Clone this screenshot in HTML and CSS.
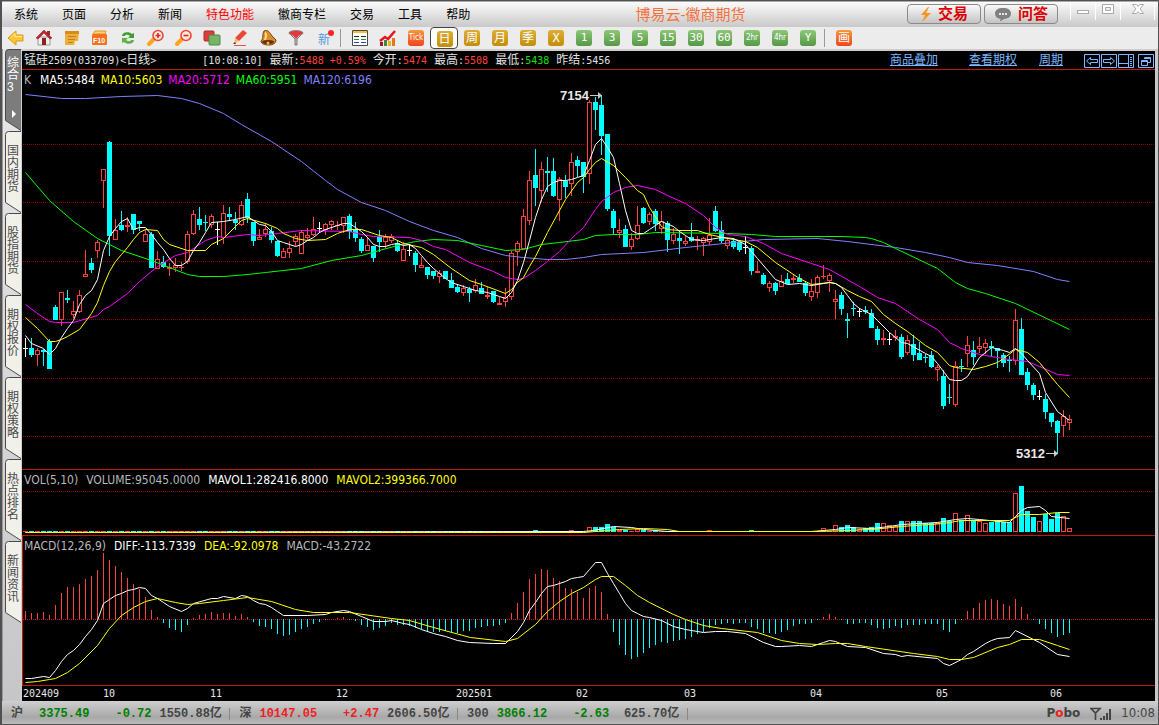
FILE: index.html
```html
<!DOCTYPE html>
<html lang="zh-CN">
<head>
    <meta charset="UTF-8">
    <meta name="viewport" content="width=device-width, initial-scale=1.0">
    <title>博易云-徽商期货</title>
    <link rel="stylesheet" href="styles.css">
</head>
<body>
    <header class="titlebar">
        <nav class="menu">
            <a href="#">系统</a>
            <a href="#">页面</a>
            <a href="#">分析</a>
            <a href="#">新闻</a>
            <a href="#" class="hot">特色功能</a>
            <a href="#">徽商专栏</a>
            <a href="#">交易</a>
            <a href="#">工具</a>
            <a href="#">帮助</a>
        </nav>
        <h1>博易云-徽商期货</h1>
        <div class="actions">
            <button class="action">
                <svg width="12" height="15" viewBox="0 0 12 15"><path d="M8 0L1 8h4L2 15l9-9H6l3-6z" fill="#f7941d"/></svg>
                交易
            </button>
            <button class="action">
                <svg width="18" height="15" viewBox="0 0 18 15"><path d="M9 1c5 0 8 2 8 5.500s-3 5-7 5.500L6 14.500 6.500 12C3 11.500 1 9.500 1 6.500 1 3 4 1 9 1z" fill="#808080"/><path d="M5 6h2v2H5zM8 6h2v2H8zM11 6h2v2h-2z" fill="#e8e8e8"/></svg>
                问答
            </button>
        </div>
        <div class="winbtns">
            <button aria-label="最小化"><svg width="14" height="12"><rect x="1.500" y="7.500" width="11" height="3" fill="#fff" stroke="#aaa"/></svg></button>
            <button aria-label="最大化"><svg width="14" height="12"><path d="M1.500 1.500h11v9h-11z" fill="#fff" stroke="#aaa"/><path d="M4.500 4.500h5v3h-5z" fill="#eee" stroke="#aaa"/></svg></button>
            <button class="close" aria-label="关闭"><svg width="14" height="12"><path d="M1.500 1.500h4L7 3.500l1.500-2h4L9 6l3.500 4.500h-4L7 8.500l-1.500 2h-4L5 6z" fill="#fff" stroke="#aaa"/></svg></button>
        </div>
    </header>

    <div class="toolbar">
        <button aria-label="后退"><svg width="18" height="18" viewBox="0 0 18 18"><path d="M1 9l8-7v4h7v6H9v4z" fill="#fcc62e" stroke="#d9981a"/><path d="M4 8.500l4-4v3h7" fill="none" stroke="#fff0a0"/></svg></button>
        <button aria-label="首页"><svg width="18" height="18" viewBox="0 0 18 18"><path d="M3 8h12v8H3z" fill="#eee" stroke="#999"/><path d="M12 2h3v4h-3z" fill="#9c2a2a"/><path d="M1 9l8-8 8 8-2 1-6-6-6 6z" fill="#c8202c" stroke="#8c1820" stroke-width=".5"/><path d="M7 9h4v7H7z" fill="#8d2020"/></svg></button>
        <button aria-label="公告"><svg width="18" height="18" viewBox="0 0 18 18"><path d="M3 2h13l-1 10-4 4H2V3z" fill="#eeae3c"/><path d="M2 2h14v3H2z" fill="#d88a1c"/><path d="M11 16l1-4h4z" fill="#fff0bd"/><path d="M5 7.500h8M5 10.500h7M5 13.500h5" stroke="#c08020"/></svg></button>
        <button aria-label="F10"><svg width="18" height="18" viewBox="0 0 18 18"><path d="M2 5l2-3h11l-1 3z" fill="#ffcf70" stroke="#e49524"/><rect x="1" y="5" width="15" height="11" rx="1" fill="#f37120"/><text x="8" y="14" text-anchor="middle" class="f10">F10</text></svg></button>
        <button aria-label="刷新"><svg width="18" height="18" viewBox="0 0 18 18"><path d="M3 7c0-4 7-5 10-2l2-1v5h-6l2-2c-3-2-5-1-5 0z" fill="#439c2f"/><path d="M15 11c0 4-7 5-10 2l-2 1V9h6l-2 2c3 2 5 1 5 0z" fill="#5db343"/></svg></button>
        <button aria-label="放大"><svg width="18" height="18" viewBox="0 0 18 18"><path d="M7 10l-5 5" stroke="#fca51c" stroke-width="4" stroke-linecap="round"/><circle cx="11" cy="6.500" r="5" fill="#fbe9e2" stroke="#ee4532" stroke-width="1.600"/><path d="M8.500 6.500h5M11 4v5" stroke="#e12617" stroke-width="1.600"/></svg></button>
        <button aria-label="缩小"><svg width="18" height="18" viewBox="0 0 18 18"><path d="M7 10l-5 5" stroke="#fca51c" stroke-width="4" stroke-linecap="round"/><circle cx="11" cy="6.500" r="5" fill="#fbe9e2" stroke="#ee4532" stroke-width="1.600"/><path d="M8.500 6.500h5" stroke="#e12617" stroke-width="1.600"/></svg></button>
        <button aria-label="叠加"><svg width="18" height="18" viewBox="0 0 18 18"><rect x="1" y="2" width="10" height="10" rx="1" fill="#dd3b3b" stroke="#b42a2a"/><rect x="6" y="6" width="11" height="10" rx="1" fill="#76b569" stroke="#4e8748"/></svg></button>
        <button aria-label="画线"><svg width="18" height="18" viewBox="0 0 18 18"><path d="M4 9l8-8 4 3-8 8z" fill="#ed4634"/><path d="M4 9l4 3-5 3z" fill="#f6b67b"/><path d="M2 15l2-2 1 2z" fill="#333"/><path d="M3 16.500h12" stroke="#e85340"/></svg></button>
        <button aria-label="预警"><svg width="18" height="18" viewBox="0 0 18 18"><path d="M5 2c4-2 6 2 8 5l4 4c0 3-3 5-7 5s-8-1-8-4c3-3 1-7 3-10z" fill="#d98f25" stroke="#7c3b12"/><path d="M6 4c2 1 1 4 0 7" stroke="#ffe08c" stroke-width="2" fill="none"/><ellipse cx="9" cy="13" rx="6" ry="2" fill="#642c12"/><circle cx="9" cy="14" r="1.500" fill="#f5bd31"/></svg></button>
        <button aria-label="筛选"><svg width="18" height="18" viewBox="0 0 18 18"><path d="M2 4l6 6v6h2v-6l6-6z" fill="#c4c4c4" stroke="#777"/><ellipse cx="9" cy="4" rx="7" ry="2.500" fill="#e9343a" stroke="#888"/><path d="M6 6h6l-3 4z" fill="#e9343a"/></svg></button>
        <button class="newbtn">新<i></i></button>
        <span class="sep"></span>
        <button aria-label="报价"><svg width="18" height="18" viewBox="0 0 18 18"><path d="M1.500 1.500h15v15h-15z" fill="#fff" stroke="#4a4a4a"/><path d="M2 3h14" stroke="#f5bb3d" stroke-width="2"/><path d="M3 7.500h5M10 7.500h5" stroke="#222"/><path d="M3 10.500h5M10 10.500h5" stroke="#1b9b33"/><path d="M3 13.500h5M10 13.500h5" stroke="#2340b0"/></svg></button>
        <button aria-label="走势"><svg width="18" height="18" viewBox="0 0 18 18"><path d="M1 13h3v4H1z" fill="#8d2121"/><path d="M5 11h3v6H5z" fill="#418838"/><path d="M9 12h3v5H9z" fill="#f4ad20"/><path d="M13 9h3v8h-3z" fill="#e2761b"/><path d="M1 12l5-4 3 2 7-8" fill="none" stroke="#e6151b" stroke-width="2.500"/></svg></button>
        <button><span class="tile orange small">Tick</span></button>
        <button class="current"><span class="tile amber">日</span></button>
        <button><span class="tile amber">周</span></button>
        <button><span class="tile amber">月</span></button>
        <button><span class="tile amber">季</span></button>
        <button><span class="tile amber">X</span></button>
        <button><span class="tile green">1</span></button>
        <button><span class="tile green">3</span></button>
        <button><span class="tile green">5</span></button>
        <button><span class="tile green">15</span></button>
        <button><span class="tile green">30</span></button>
        <button><span class="tile green">60</span></button>
        <button><span class="tile green small">2hr</span></button>
        <button><span class="tile green small">4hr</span></button>
        <button><span class="tile green">Y</span></button>
        <span class="sep"></span>
        <button><span class="tile orange">画</span></button>
    </div>

    <main class="workspace">
        <aside class="tabs">
            <svg width="0" height="0" class="defs">
                <symbol id="tab" viewBox="0 0 16 82"><path d="M16 .500H3.500Q.500 .500 .500 3.500V71.500L16 81.500" stroke-width="1"/></symbol>
            </svg>
            <button class="tab active"><svg><use href="#tab"/></svg><span>综合3</span><b></b></button>
            <button class="tab"><svg><use href="#tab"/></svg><span>国内期货</span></button>
            <button class="tab"><svg><use href="#tab"/></svg><span>股指期货</span></button>
            <button class="tab"><svg><use href="#tab"/></svg><span>期权报价</span></button>
            <button class="tab"><svg><use href="#tab"/></svg><span>期权策略</span></button>
            <button class="tab"><svg><use href="#tab"/></svg><span>热点排名</span></button>
            <button class="tab"><svg><use href="#tab"/></svg><span>新闻资讯</span></button>
        </aside>

        <section class="chart">
            <div class="quote">
                <span class="name">锰硅<i>2509(033709)&lt;</i>日线<i>&gt;</i></span>
                <span><i>[10:08:10]</i></span>
                <span>最新<i>:<em class="up">5488 +0.59%</em></i></span>
                <span>今开<i>:<em class="up">5474</em></i></span>
                <span>最高<i>:<em class="up">5508</em></i></span>
                <span>最低<i>:<em class="down">5438</em></i></span>
                <span>昨结<i>:5456</i></span>
                <div class="links">
                    <a href="#" class="overlay">商品叠加</a>
                    <a href="#">查看期权</a>
                    <a href="#">周期</a>
                </div>
                <div class="panebtns">
                    <button aria-label="左移"><svg width="16" height="14"><path d="M.500 .500h15v13H.500zM2.500 7l4-3.500v2h7v3h-7v2z"/></svg></button>
                    <button aria-label="右移"><svg width="16" height="14"><path d="M.500 .500h15v13H.500zM13.500 7l-4-3.500v2h-7v3h7v2z"/></svg></button>
                    <button aria-label="侧栏"><svg width="16" height="14"><path d="M.500 .500h15v13H.500zM10.500 1v12M1 9.500h9M12 3.500h2M12 5.500h2M12 7.500h2M12 9.500h2M12 11.500h2"/></svg></button>
                    <button class="restore" aria-label="还原"><svg width="16" height="14"><path d="M.500 .500h15v13H.500zM6.500 5V3.500h6v5H10M6 4.500h6M3.500 6.500h6v5h-6zM3 7.500h6"/></svg></button>
                </div>
            </div>

            <div class="pane price">
                <svg id="price"></svg>
                <p class="legend">
                    <span class="k">K</span>
                    <span class="white">MA5:5484</span>
                    <span class="yellow">MA10:5603</span>
                    <span class="magenta">MA20:5712</span>
                    <span class="lime">MA60:5951</span>
                    <span class="blue">MA120:6196</span>
                </p>
            </div>
            <div class="pane vol">
                <svg id="vol"></svg>
                <p class="legend">
                    <span>VOL(5,10)</span>
                    <span>VOLUME:95045.0000</span>
                    <span class="white">MAVOL1:282416.8000</span>
                    <span class="yellow">MAVOL2:399366.7000</span>
                </p>
            </div>
            <div class="pane macd">
                <svg id="macd"></svg>
                <p class="legend">
                    <span>MACD(12,26,9)</span>
                    <span class="white">DIFF:-113.7339</span>
                    <span class="yellow">DEA:-92.0978</span>
                    <span>MACD:-43.2722</span>
                </p>
            </div>
            <div class="axis"><svg id="axis"></svg></div>
        </section>
    </main>

    <footer class="status">
        <span class="market first">沪</span>
        <span class="down">3375.49</span>
        <span class="change down">-0.72</span>
        <span class="amount">1550.88亿</span>
        <span class="market line">深</span>
        <span class="up">10147.05</span>
        <span class="change up">+2.47</span>
        <span class="amount">2606.50亿</span>
        <span class="market line">300</span>
        <span class="down">3866.12</span>
        <span class="change down">-2.63</span>
        <span class="amount">625.70亿</span>
        <span class="line">&nbsp;</span>
        <span class="brand">P<em>o</em>bo</span>
        <svg width="22" height="14" viewBox="0 0 22 14"><path d="M1 1.500h9L5.500 6zM5.500 6v7" fill="none" stroke="#444" stroke-width="1.600"/><path d="M10 11h2v2h-2zM13 9h2v4h-2zM16 6h2v7h-2zM19 2h2v11h-2z" fill="#444"/></svg>
        <time>10:08</time>
    </footer>

    <script src="chart.js"></script>
</body>
</html>
```
FILE: styles.css
```css
* {
    box-sizing: border-box;
    margin: 0;
    padding: 0;
}
body {
    display: flex;
    flex-direction: column;
    height: 100vh;
    overflow: hidden;
    border: 1px solid #505050;
    border-left-width: 2px;
    background-color: #c8c8c8;
    font-family: "Liberation Sans", "Noto Sans CJK SC", sans-serif;
    font-size: 12px;
    color: #000;
}
button {
    border: 0;
    background: none;
    font-family: inherit;
    color: inherit;
}
svg {
    display: block;
}
i, em {
    font-style: normal;
}
a {
    color: inherit;
}

/* title bar */
.titlebar {
    display: flex;
    align-items: center;
    flex: none;
    height: 26px;
    border-top: 1px solid #aaa;
    background: linear-gradient(#fbfbfb, #c9c9c9);
}
.menu {
    display: flex;
    gap: 24px;
    padding-left: 12px;
    line-height: 24px;
}
.menu a {
    text-decoration: none;
}
.menu .hot {
    color: #f00;
}
.titlebar h1 {
    flex: 1;
    padding-left: 4px;
    text-align: center;
    font-size: 15px;
    font-weight: normal;
    line-height: 22px;
    color: #f4713c;
}
.actions {
    display: flex;
    align-self: flex-start;
    gap: 3px;
    padding-top: 2px;
}
.action {
    display: flex;
    align-items: center;
    justify-content: center;
    gap: 6px;
    width: 74px;
    height: 20px;
    border: 1px solid #8a8a8a;
    border-radius: 4px;
    background: linear-gradient(#fafafa, #c4c4c4);
    font-size: 15px;
    font-weight: bold;
    line-height: 18px;
    color: #e00000;
}
.winbtns {
    display: flex;
    align-self: flex-start;
    margin: 0 3px 0 12px;
}
.winbtns button {
    display: flex;
    justify-content: center;
    width: 25px;
    height: 18px;
    padding-top: 1px;
    border-left: 1px solid #fff;
}
.winbtns .close {
    width: 35px;
    border-right: 1px solid #fff;
}

/* toolbar */
.toolbar {
    display: flex;
    flex: none;
    height: 22px;
    background-color: #ececec;
}
.toolbar button {
    display: flex;
    align-items: center;
    justify-content: center;
    width: 28px;
    height: 22px;
}
.toolbar .current {
    padding: 1px 0 0 1px;
    border: 1px solid #444;
    border-radius: 4px;
    background-color: #fff;
}
.sep {
    width: 8px;
    height: 18px;
    margin-top: 2px;
    background: linear-gradient(#999, #999) 2px 0 / 1px 100% no-repeat;
}
.tile {
    width: 16px;
    height: 16px;
    border-radius: 3px;
    font-family: "DejaVu Sans Mono", "Noto Sans CJK SC", monospace;
    font-size: 12px;
    line-height: 16px;
    text-align: center;
    white-space: nowrap;
    color: #fff;
}
.amber {
    background: linear-gradient(#dcae38, #c38d08);
}
.green {
    background: linear-gradient(#8cc878, #559845);
    font-size: 11px;
}
.orange {
    background: linear-gradient(#f79a3a, #f0431f);
}
.tile.small {
    font-family: "DejaVu Sans Condensed", "Liberation Sans", sans-serif;
    font-size: 8px;
}
.f10 {
    font: bold 7px "Liberation Sans", sans-serif;
    fill: #fff;
}
.toolbar .newbtn {
    position: relative;
    font-size: 12px;
    color: #5598d8;
}
.newbtn i {
    position: absolute;
    top: 3px;
    right: 4px;
    width: 6px;
    height: 6px;
    border-radius: 50%;
    background-color: #f22;
}

/* side tabs */
.workspace {
    display: flex;
    flex: 1;
    min-height: 0;
}
.tabs {
    flex: none;
    width: 18px;
    padding-left: 2px;
    border-left: 1px solid #9a9a9a;
    background: linear-gradient(#e9e9ec, #c6c6c8);
}
.defs {
    position: absolute;
}
.tab {
    position: relative;
    display: flex;
    align-items: flex-start;
    width: 16px;
    height: 82px;
    padding: 14px 0 0 2px;
    text-align: left;
    color: #4a4a4a;
}
.tab svg {
    position: absolute;
    top: 0;
    left: 0;
    width: 16px;
    height: 82px;
    fill: #f1f1ea;
    stroke: #4a4a4a;
}
.tab span {
    position: relative;
    width: 12px;
    font-size: 12px;
    line-height: 12px;
    word-break: break-all;
}
.tab.active {
    padding-top: 8px;
    color: #fff;
}
.tab.active svg {
    fill: #7c7c7c;
}
.tab b {
    position: absolute;
    top: 61px;
    left: 7px;
    border: 4px solid transparent;
    border-left-color: #fff;
    border-right: 0;
}

/* chart */
.chart {
    display: flex;
    flex: 1;
    flex-direction: column;
    min-width: 0;
    margin-right: 3px;
    border-top: 2px solid #d0cccc;
    border-left: 2px solid #d0cccc;
    background-color: #000;
    color: #e0e0e0;
}
.quote {
    display: flex;
    gap: 7px;
    flex: none;
    height: 19px;
    padding-left: 2px;
    border-bottom: 1px solid #c01808;
    line-height: 18px;
    white-space: nowrap;
}
.quote i, .axis {
    font-family: "DejaVu Sans Mono", monospace;
    font-size: 10px;
}
.quote .name {
    margin-right: 39px;
}
.quote .up {
    color: #ff4040;
}
.quote .down {
    color: #10e010;
}
.links {
    display: flex;
    gap: 22px;
    margin-left: auto;
    color: #7ab8ff;
}
.overlay {
    margin-right: 9px;
}
.panebtns {
    display: flex;
    gap: 1px;
    padding: 1px 1px 0 14px;
    fill: none;
    stroke: #7ab8ff;
}
.restore {
    margin-left: 3px;
}
.pane {
    position: relative;
    flex: none;
    border-bottom: 1px solid #c01808;
}
.pane svg {
    position: absolute;
    top: 0;
    left: 0;
    width: 100%;
    height: 100%;
}
.price {
    flex: 1;
}
.vol {
    height: 66px;
}
.macd {
    height: 150px;
    border-left: 1px solid #c01808;
}
.macd svg {
    left: -1px;
}
.legend {
    position: relative;
    display: flex;
    gap: 8px;
    padding-left: 2px;
    font-family: "DejaVu Sans Condensed", "DejaVu Sans", sans-serif;
    font-size: 12px;
    line-height: 20px;
    color: #b8b8b8;
}
.price .legend {
    gap: 6px;
}
.macd .legend {
    padding-left: 1px;
}
.legend .k {
    margin-right: 3px;
}
.legend .white {
    color: #fff;
}
.legend .yellow {
    color: #ff0;
}
.legend .magenta {
    color: #f0f;
}
.legend .lime {
    color: #0f0;
}
.legend .blue {
    color: #8080ff;
}
.axis {
    flex: none;
    height: 15px;
}
.axis svg {
    width: 100%;
    height: 15px;
    fill: #e8e8e8;
}
.mark {
    font: bold 13px "Liberation Sans", sans-serif;
    fill: #e8e8e8;
}

/* status bar */
.status {
    display: flex;
    align-items: baseline;
    flex: none;
    height: 23px;
    padding: 2px 3px 0 9px;
    background: linear-gradient(#cfcfcf, #a8a8a8 70%, #bbb);
    font-family: "Liberation Mono", "Noto Sans CJK SC", monospace;
    font-weight: bold;
    white-space: nowrap;
    color: #444;
}
.status svg {
    align-self: center;
}
.market {
    margin-right: 8px;
}
.market.first {
    margin-right: 16px;
}
.change {
    margin-left: 26px;
}
.amount {
    width: 62px;
    margin: 0 8px;
    text-align: right;
}
.line {
    padding-left: 9px;
    border-left: 1px solid #888;
    line-height: 12px;
}
.status .down {
    color: #008000;
}
.status .up {
    color: #f02020;
}
.brand {
    margin: 0 10px 0 auto;
    font-family: "DejaVu Sans", sans-serif;
    font-size: 12px;
}
.brand em {
    color: #f02020;
}
.status time {
    margin-left: 9px;
    font-family: "DejaVu Sans Condensed", sans-serif;
    font-size: 13px;
    font-weight: normal;
}
```
FILE: chart.js
```js
const STEP = 6
const X0 = 25
const RED = '#ff4040'
const CYAN = '#00ffff'

// colour (r up, c down, w flat), body top, body bottom, high, low
const candles = `
w 348 348 338 357,c 348 355 338 357,r 350 355 348 366,c 350 352 349 366,c 341 369 339 369,c 307 320 305 320,r 292 320 292 326,
c 298 300 290 303,r 311 315 301 318,r 295 312 290 313,r 274 277 250 277,c 263 270 258 273,r 242 251 240 258,r 169 181 169 208,
c 142 236 141 256,r 230 240 219 240,c 225 230 211 231,r 225 227 217 232,c 214 230 214 234,c 221 224 221 231,r 234 242 230 242,
c 234 268 232 268,r 259 269 251 269,c 262 267 256 268,r 267 269 263 276,r 265 268 258 272,r 267 268 262 271,r 234 262 231 264,
r 214 234 210 235,c 219 225 207 230,c 222 223 215 231,r 216 225 214 228,w 229 229 222 245,r 213 238 205 244,c 214 217 207 221,
c 220 223 212 230,r 205 225 201 226,c 199 218 193 223,c 222 241 222 246,r 237 240 229 240,r 229 234 223 237,c 231 240 227 243,
c 241 256 241 257,r 251 258 248 258,r 248 253 241 258,r 236 242 234 246,r 232 254 230 254,r 235 238 228 240,r 229 235 217 236,
w 228 228 222 233,r 224 230 223 235,r 221 225 220 230,r 225 226 221 230,r 217 226 217 233,c 216 232 214 239,c 229 238 222 242,
c 239 251 237 253,r 245 251 237 251,c 246 258 246 262,c 237 242 230 252,r 237 242 234 249,r 236 241 234 243,c 243 251 240 252,
r 249 261 242 261,w 250 250 244 256,c 253 265 251 272,r 265 268 257 268,c 267 275 267 279,c 271 276 271 279,r 273 277 270 283,
c 271 279 271 279,c 280 288 273 288,c 287 292 285 293,r 288 293 285 296,c 289 293 287 302,r 285 291 279 293,c 288 294 282 294,
r 295 297 287 299,c 291 302 291 303,r 303 305 297 305,r 297 302 288 307,r 253 297 251 300,r 243 252 241 266,r 216 249 209 249,
r 180 221 171 225,c 175 188 149 206,r 169 191 162 202,c 171 173 157 192,c 171 196 158 197,r 179 200 177 221,c 181 187 175 198,
r 162 184 153 196,c 160 166 156 177,c 162 177 162 193,r 102 174 100 184,c 102 110 97 130,c 105 136 95 155,c 134 209 134 211,
c 211 228 209 235,r 230 233 219 238,c 229 247 225 247,r 239 247 233 250,r 225 239 206 240,c 208 223 207 224,r 214 222 212 225,
c 211 224 209 231,r 221 229 211 234,c 223 240 221 252,r 234 241 228 244,c 238 241 230 254,r 241 244 236 246,c 237 241 223 242,
r 239 241 236 250,r 238 243 237 256,r 235 242 218 245,c 211 231 206 232,c 230 241 221 243,r 240 246 238 249,c 241 247 238 249,
c 242 250 242 252,w 247 247 236 254,c 248 271 246 275,r 271 273 261 273,c 275 284 273 285,r 283 288 281 292,c 283 291 282 295,
r 281 287 275 287,c 279 284 273 284,r 278 280 274 283,c 278 282 274 282,c 283 293 281 296,r 291 297 279 301,r 277 293 275 298,
r 276 277 265 279,r 275 281 273 292,r 299 302 290 319,c 295 309 292 315,c 319 321 313 338,c 308 309 302 316,w 311 311 308 317,
c 310 312 306 314,c 313 328 309 328,c 329 340 326 345,r 338 340 330 345,w 339 339 333 345,r 336 338 330 341,c 337 357 334 359,
r 340 353 335 355,c 344 355 335 361,c 353 360 342 360,c 357 358 354 363,c 355 367 351 368,r 367 370 365 381,c 376 406 370 409,
c 397 398 384 404,r 366 405 361 407,c 366 367 359 372,r 345 354 336 367,c 350 357 341 365,r 346 349 337 353,r 343 348 339 354,
c 346 348 341 356,c 348 351 348 368,c 355 363 353 367,c 360 361 356 372,r 320 361 309 365,c 329 375 318 375,c 372 385 368 390,
c 385 395 383 400,w 396 396 390 400,c 399 412 394 419,c 413 422 413 427,c 421 433 420 454,r 416 426 410 437,r 419 423 415 430
`.trim().split(',').map(s => {
    const [c, ...n] = s.trim().split(' ')
    return [c, ...n.map(Number)]
})

const ma5 = '25,335 31,343 43,348 49,354 55,348 61,337 67,328 73,320 79,304 85,295 91,290 97,279 103,250 109,236 115,228 121,221 127,218 133,229 139,227 145,227 151,234 157,242 163,249 169,258 175,265 181,265 187,261 193,250 199,242 205,232 211,222 223,221 235,219 247,216 253,220 259,224 265,225 271,231 277,240 283,242 295,246 301,244 307,240 313,237 319,232 325,229 343,223 349,223 355,227 361,231 367,237 373,244 379,246 385,246 391,244 397,243 403,245 409,244 415,248 421,255 427,262 433,268 439,273 445,278 451,282 469,288 475,290 487,292 499,296 505,298 511,292 517,280 523,262 529,240 535,217 541,199 547,186 553,182 559,180 565,180 571,179 577,177 583,175 589,160 595,144 601,138 607,147 613,157 619,183 625,210 631,230 637,233 643,233 649,229 655,225 661,221 673,226 679,231 685,235 691,239 703,240 721,237 733,238 739,241 745,244 757,258 775,279 787,284 799,283 811,285 823,283 829,282 835,283 841,287 847,295 853,303 859,308 871,314 877,320 889,332 901,342 907,343 925,353 931,356 937,363 949,379 955,380 961,380 967,376 979,357 991,347 1003,350 1009,352 1015,348 1021,353 1027,360 1039,373 1045,392 1057,411 1069,420'
const ma10 = '25,317 37,328 49,341 55,341 61,339 67,336 79,329 85,321 91,313 97,302 103,285 109,271 115,261 121,254 127,247 133,239 139,232 145,229 157,230 163,239 169,244 187,250 205,250 211,244 223,238 235,226 241,220 247,218 265,223 277,228 283,233 295,238 307,240 325,239 337,233 349,229 361,229 367,231 379,235 391,237 403,243 421,247 433,254 451,268 469,280 481,284 505,293 511,289 517,282 523,277 529,266 535,256 541,244 547,232 565,199 577,182 583,177 589,169 595,162 601,158 613,165 625,177 637,190 643,194 649,207 661,226 667,229 679,230 697,230 709,234 727,238 745,241 757,247 775,262 799,278 811,284 829,282 835,283 847,290 859,296 871,301 883,314 895,323 907,331 925,345 937,352 949,365 955,367 973,369 985,366 997,362 1003,358 1015,349 1027,352 1039,362 1057,384 1069,397'
const ma20 = '25,304 37,313 49,321 55,322 73,322 97,315 103,309 109,306 127,293 139,281 157,266 175,255 187,252 193,248 205,240 217,236 223,237 247,234 259,235 277,233 301,230 349,231 361,234 373,236 409,237 421,240 433,246 445,249 469,262 493,271 505,277 517,279 523,278 535,270 547,261 559,251 571,238 583,227 595,209 601,201 613,192 625,187 637,185 655,189 667,195 685,203 703,215 715,227 727,234 745,236 763,243 781,253 811,263 829,269 859,286 877,297 895,303 919,319 937,329 949,342 961,348 979,354 1009,359 1027,361 1039,366 1057,374 1069,375'
const ma60 = '25,172 49,200 73,221 97,238 121,250 151,260 187,274 199,276 223,276 247,274 265,272 301,268 331,260 361,255 379,250 397,245 415,241 433,239 457,240 481,245 505,250 523,249 541,244 559,242 583,239 595,235 613,234 637,234 655,232 727,233 751,234 775,236 841,236 865,237 871,238 883,242 895,248 937,268 955,282 967,288 985,293 1015,303 1069,329'
const ma120 = '25,94 61,98 85,98 121,96 157,95 181,98 199,103 223,113 241,124 271,141 301,161 325,180 337,189 361,202 385,210 409,221 433,230 457,237 481,248 505,255 523,257 547,259 565,259 583,257 601,254 643,252 685,247 733,242 763,239 817,238 847,241 895,247 925,252 949,257 967,262 997,265 1033,271 1057,279 1069,281'

// top of each volume bar; bars not listed are one pixel high
const volTops = { 85: 530, 91: 530, 94: 527, 95: 527, 96: 527, 97: 524, 98: 527, 99: 530, 100: 530, 102: 529, 103: 530, 114: 530, 121: 530 }
const lateVol = [528, 531, 525, 527, 525, 527, 529, 528, 527, 523, 523, 525, 526, 521, 521, 521, 521, 523, 523, 523, 518, 521, 513, 520, 515, 520, 521, 523, 522, 520, 522, 522, 493, 486, 511, 517, 521, 514, 519, 513, 516, 528]
lateVol.forEach((v, i) => volTops[133 + i] = v)
const vol5 = '25,532 583,531 593,530 613,526 631,527 643,529 667,531 811,531 835,529 847,527 871,528 889,526 901,524 937,522 955,519 967,518 979,519 1009,522 1015,516 1021,510 1027,507 1039,506 1045,510 1051,516 1069,518'
const vol10 = '25,532 583,532 619,529 643,528 667,529 679,531 817,531 847,530 871,529 901,526 943,523 961,520 1009,520 1021,514 1039,514 1057,512 1069,512'

const ZERO = 619
const bars = [
    611, 613, 613, 612, 615, 605, 593, 587, 587, 584, 579, 576, 570, 553, 560, 566, 572, 578, 584, 589, 597, 610, 617, 623, 628,
    630, 632, 625, 618, 615, 614, 612, 614, 613, 613, 616, 614, 617, 622, 626, 627, 629, 634, 636, 635, 632, 629, 627, 624, 622,
    620, 619, 618, 617, 620, 621, 625, 627, 630, 628, 626, 623, 625, 625, 626, 628, 629, 631, 632, 632, 631, 632, 633, 631, 631,
    628, 627, 626, 626, 625, 623, 613, 603, 592, 579, 574, 569, 570, 578, 581, 588, 589, 592, 598, 588, 586, 592, 614, 632, 645,
    655, 659, 657, 653, 648, 645, 642, 643, 641, 640, 639, 637, 634, 632, 628, 625, 624, 623, 624, 623, 623, 627, 629, 633, 633,
    634, 632, 630, 626, 624, 624, 623, 620, 617, 614, 617, 620, 624, 624, 623, 623, 625, 628, 629, 628, 626, 628, 625, 625, 625,
    624, 624, 624, 630, 632, 624, 620, 611, 608, 603, 600, 599, 600, 604, 606, 599, 607, 614, 620, 624, 629, 633, 637, 635, 633
]
const diff = '25,678 31,678 43,676 49,677 55,670 61,661 67,654 73,650 79,644 85,636 91,629 97,620 103,603 109,599 115,595 121,593 127,590 133,589 139,587 145,588 151,595 157,598 163,602 169,606 181,611 187,608 193,603 211,598 217,598 223,596 235,598 241,595 247,596 253,600 259,603 265,604 271,607 277,611 283,615 307,615 325,614 331,612 343,610 349,611 361,616 373,621 385,621 391,620 403,623 409,624 421,629 433,633 445,636 457,640 469,642 493,643 505,643 511,637 517,631 523,622 529,610 535,602 541,593 547,586 553,585 559,583 565,581 571,578 577,577 583,576 589,569 595,562 601,562 607,573 613,583 619,593 625,603 631,610 637,613 643,616 649,617 661,620 673,626 685,629 703,632 715,631 727,631 745,633 763,642 775,646 781,646 799,645 811,646 823,642 829,640 835,641 847,646 865,647 883,653 895,654 901,656 907,655 937,658 943,663 949,665 961,659 967,654 973,651 985,643 991,640 997,638 1009,637 1015,630 1033,639 1039,642 1057,654 1069,656'
const dea = '25,682 37,681 49,679 55,678 67,672 79,663 97,645 109,628 121,615 133,607 145,601 157,598 175,602 187,604 199,603 223,600 247,597 271,601 295,609 313,612 349,612 391,618 409,620 433,627 470,637 505,641 517,638 535,624 547,611 559,601 571,593 583,587 595,579 601,576 613,576 625,585 637,595 649,602 673,614 685,619 703,625 721,628 757,632 781,640 799,643 817,644 835,643 847,643 865,646 913,653 937,656 949,659 961,659 973,657 997,647 1009,644 1021,639 1039,639 1057,645 1069,649'

function rect(x, y, w, h, color) {
    return `<rect x="${x}" y="${y}" width="${w}" height="${h}" fill="${color}"/>`
}

function box(x, top, bottom, color) {
    return `<rect x="${x - 1.5}" y="${top + 0.5}" width="4" height="${bottom - top - 1}" fill="#000" stroke="${color}"/>`
}

function line(points, color) {
    return `<polyline points="${points}" transform="translate(.5 .5)" fill="none" stroke="${color}"/>`
}

function grid(y, color) {
    return `<path d="M23 ${y}.5H3000" stroke="${color}" stroke-dasharray="1 1"/>`
}

// all panes share one coordinate space, top is where the pane starts in it
function draw(id, top, crisp, smooth) {
    document.getElementById(id).innerHTML =
        `<g transform="translate(-22 ${-top})"><g shape-rendering="crispEdges">${crisp}</g>${smooth}</g>`
}

let price = [144, 202, 261, 319, 378, 436].map(y => grid(y, '#900000')).join('')
let vol = grid(491, '#900000')
let macd = grid(ZERO, '#c01818')

candles.forEach(([c, top, bottom, high, low], i) => {
    const x = X0 + i * STEP
    const color = c == 'w' ? '#fff' : c == 'r' ? RED : CYAN

    price += rect(x, high, 1, low - high, color)
    if (c == 'r' && bottom - top > 2) {
        price += box(x, top, bottom, color)
    } else {
        price += rect(x - 2, top, 5, Math.max(bottom - top, 1), color)
    }

    const v = volTops[i] || 531
    if (c == 'c' || 532 - v < 3) {
        vol += rect(x - 2, v, 5, 532 - v, c == 'c' ? CYAN : RED)
    } else {
        vol += box(x, v, 532, RED)
    }

    const m = bars[i]
    macd += m < ZERO ? rect(x, m, 1, ZERO - m, RED) : rect(x, ZERO, 1, m - ZERO, CYAN)
})

const marks = `
    <text class="mark" x="560" y="100">7154</text>
    <path d="M590 95.5h9" stroke="#ccc"/><path d="M598 92l4 3.500-4 3.500z" fill="#ccc"/>
    <text class="mark" x="1016" y="458">5312</text>
    <path d="M1046 453.5h9" stroke="#ccc"/><path d="M1054 450l4 3.500-4 3.500z" fill="#ccc"/>`

draw('price', 70, price, line(ma120, '#8080ff') + line(ma60, '#00ff00') + line(ma20, '#ff00ff') + line(ma10, '#ffff00') + line(ma5, '#ffffff') + marks)
draw('vol', 470, vol, line(vol5, '#ffffff') + line(vol10, '#ffff00'))
draw('macd', 536, macd, line(diff, '#ffffff') + line(dea, '#ffff00'))

const months = [[23, '202409'], [103, '10'], [210, '11'], [336, '12'], [456, '202501'], [576, '02'], [684, '03'], [810, '04'], [936, '05'], [1050, '06']]
draw('axis', 686, '', months.map(([x, t]) => `<text x="${x}" y="697">${t}</text>`).join(''))
```
